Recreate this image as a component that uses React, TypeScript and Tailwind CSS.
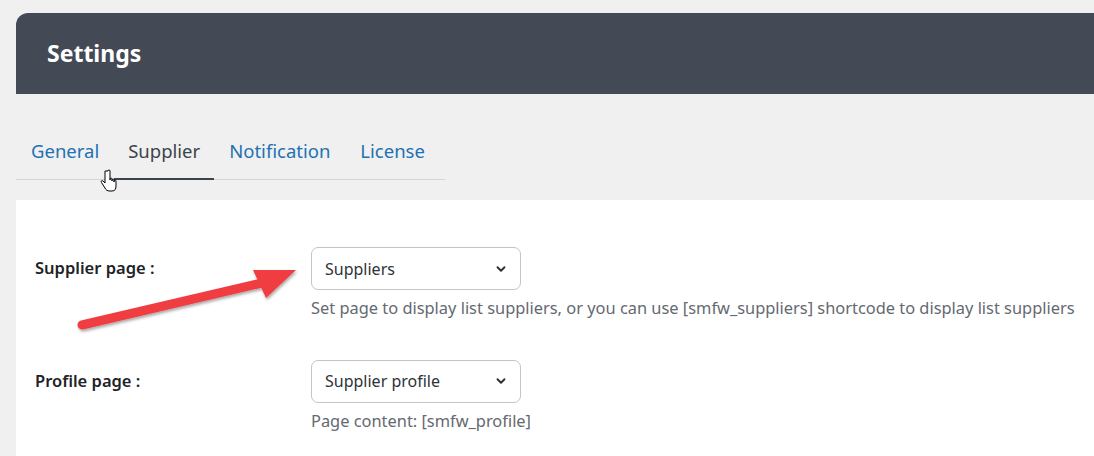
import React from "react";

const Chevron = () => (
  <svg width="14" height="14" viewBox="0 0 16 16" fill="none" stroke="#2c3338" strokeWidth="2.2" strokeLinecap="round" strokeLinejoin="round">
    <path d="M4 6l4 4 4-4" />
  </svg>
);

function Row({ label, value, desc, top }: { label: string; value: string; desc: string; top: string }) {
  return (
    <div className={`flex ${top}`}>
      <div className="w-[295px] pl-[19px] pt-[9px] text-[16.5px] font-semibold text-[#1d2327]">{label}</div>
      <div className="flex flex-col">
        <div className="w-[210px] h-[43px] rounded-[7px] border border-[#c3c4c7] bg-white flex items-center justify-between pl-[13px] pr-[12px] text-[16px] text-[#2c3338]">
          <span>{value}</span>
          <Chevron />
        </div>
        <div className="mt-[6px] text-[16.4px] text-[#646970] whitespace-nowrap">{desc}</div>
      </div>
    </div>
  );
}

export default function App() {
  return (
    <div className="w-[1094px] h-[456px] bg-[#f0f0f1] pt-[13px] pl-[16px] overflow-hidden relative" style={{ fontFamily: '"Noto Sans", "Open Sans", sans-serif' }}>
      <div className="bg-[#f0f0f1] rounded-tl-[12px] overflow-hidden">
        <div className="h-[81px] bg-[#434a56] flex items-center pl-[31px]">
          <span className="text-white text-[23px] font-bold">Settings</span>
        </div>
        <div className="h-[106px] pt-[43px]">
          <div className="w-[429px] border-b border-[#d5d5d8] flex text-[18.5px] h-[43px]">
            <div className="px-[15px] text-[#2271b1]">General</div>
            <div className="px-[14px] text-[#3c434a] border-b-2 border-[#3c434a] -mb-px">Supplier</div>
            <div className="px-[15px] text-[#2271b1]">Notification</div>
            <div className="px-[15px] text-[#2271b1]">License</div>
          </div>
        </div>
        <div className="bg-white h-[260px] pt-[47px]">
          <Row label="Supplier page :" value="Suppliers" desc="Set page to display list suppliers, or you can use [smfw_suppliers] shortcode to display list suppliers" top="" />
          <Row label="Profile page :" value="Supplier profile" desc="Page content: [smfw_profile]" top="mt-[39px]" />
        </div>
      </div>
      <svg className="absolute left-0 top-0" width="1094" height="456">
        <defs>
          <filter id="s" x="-20%" y="-20%" width="140%" height="140%">
            <feDropShadow dx="1" dy="2" stdDeviation="1.5" floodOpacity="0.35" />
          </filter>
        </defs>
        <g filter="url(#s)">
          <line x1="82" y1="325" x2="262" y2="283" stroke="#ef3e42" strokeWidth="9" strokeLinecap="round" />
          <polygon points="296,270 253,270 266,298" fill="#ef3e42" />
        </g>
      </svg>
      <svg className="absolute left-[100px] top-[169px]" width="18" height="24" viewBox="0 0 18 24">
        <path d="M5 2v12l-2-2c-1-1-2.5 0-1.5 1.5L5 19c1 2 2 3 5 3h2c3 0 4-2 4-5v-5c0-1-1.5-1.5-2 0v1-2c0-1-1.5-1.5-2 0v1-2c0-1-1.5-1.5-2 0v1V2c0-1.5-2-1.5-2 0z" fill="white" stroke="black" strokeWidth="1" />
      </svg>
    </div>
  );
}
